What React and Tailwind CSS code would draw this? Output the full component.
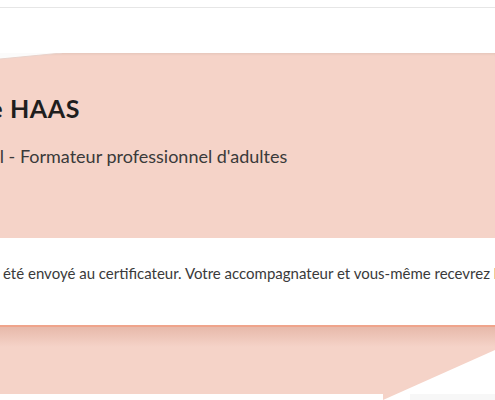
import React from "react";

export default function App() {
  const font = { fontFamily: "Lato, 'Open Sans', sans-serif" };
  return (
    <div className="w-[495px] h-[400px] overflow-hidden bg-white relative" style={font}>
      <div className="h-[8px] bg-white border-b border-[#e6e6e6]" />
      <div className="h-[45px] bg-white" />
      <div className="relative h-[185px] bg-[#f5d3c8] shadow-[inset_0_3px_3px_-2px_rgba(0,0,0,0.08)]">
        <svg className="absolute left-0 top-0" width="70" height="8" viewBox="0 0 70 8">
          <polygon points="0,0 62,0 0,6" fill="#fbfbfb" />
          <line x1="0" y1="6" x2="62" y2="0" stroke="#e8d2cb" strokeWidth="1" />
        </svg>
        <div className="flex whitespace-nowrap pt-[40px] text-[25px] font-bold text-[#1e1e1e] leading-[30px] tracking-[0.6px]">
          <div className="w-[10px] shrink-0 flex justify-end">
            <span>Marie&nbsp;</span>
          </div>
          <span>HAAS</span>
        </div>
        <div className="flex whitespace-nowrap mt-[21px] text-[18px] text-[#3a3a3a] leading-[24px]">
          <div className="w-[4px] shrink-0 flex justify-end">
            <span>Titre professionnel</span>
          </div>
          <span>&nbsp;- Formateur professionnel d'adultes</span>
        </div>
      </div>
      <div className="h-[87px] bg-white pt-[25px]">
        <div className="flex whitespace-nowrap text-[15px] leading-[20px] text-[#3a3a3a]">
          <div className="w-[3px] shrink-0 flex justify-end">
            <span>Votre dossier a&nbsp;</span>
          </div>
          <span>été envoyé au certificateur. Votre accompagnateur et vous-même recevrez bientôt un e-mail.</span>
        </div>
      </div>
      <div className="h-[2px] bg-[#efa48b]" />
      <div className="relative h-[73px] bg-[#f5d3c8]">
        <div className="absolute inset-x-0 top-0 h-[20px] bg-gradient-to-b from-[#e7b9aa] to-[#f5d3c8]" />
        <svg className="absolute right-0 bottom-0" width="112" height="50" viewBox="0 0 112 50">
          <polygon points="0,50 112,0 112,50" fill="#ffffff" />
        </svg>
        <div className="absolute left-0 bottom-0 h-[6px] w-[383px] bg-white" />
        <div className="absolute left-[410px] right-0 bottom-0 h-[6px] bg-[#f7f7f7]" />
      </div>
    </div>
  );
}
